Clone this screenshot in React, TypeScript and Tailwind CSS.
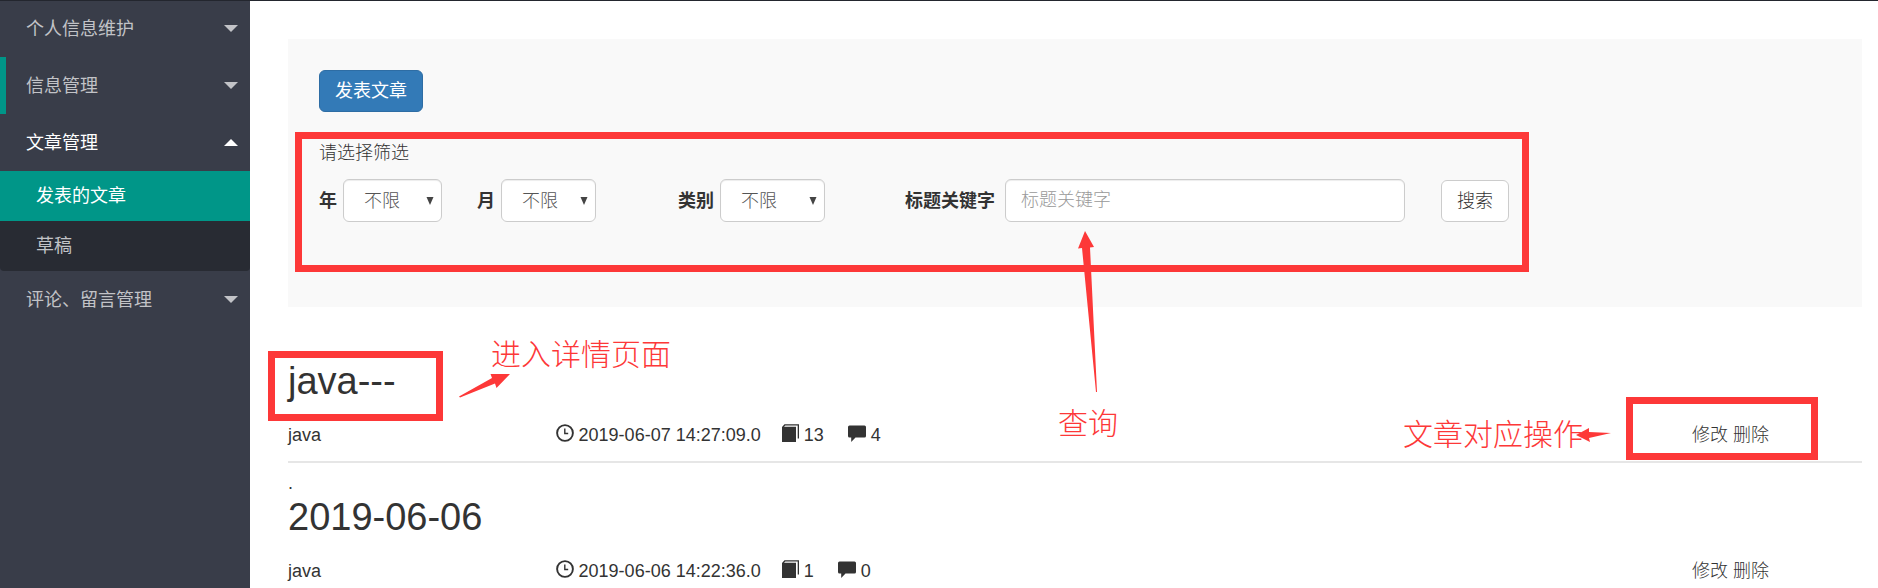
import { useState, type ReactNode } from 'react';

const CJK = "font-['Liberation_Sans','Noto_Sans_CJK_SC',sans-serif]";

function Caret({ up = false }: { up?: boolean }) {
  return (
    <svg viewBox="0 0 14 7" className="h-[7px] w-3.5 shrink-0" aria-hidden="true">
      <path d={up ? 'M0 7 7 0l7 7z' : 'M0 0h14L7 7z'} fill="currentColor" />
    </svg>
  );
}

function NavGroup({ label, open = false, marked = false, children }: { label: string; open?: boolean; marked?: boolean; children?: ReactNode }) {
  return (
    <li>
      <button
        type="button"
        aria-expanded={open}
        className={`flex h-[57px] w-full items-center justify-between border-l-[6px] pr-3 pl-5 text-left ${marked ? 'border-[#009688]' : 'border-transparent'} ${open ? 'text-white' : 'text-[#c2c3c7]'}`}
      >
        <span>{label}</span>
        <Caret up={open} />
      </button>
      {children}
    </li>
  );
}

function FilterSelect({ id, label, width, options }: { id: string; label: string; width: string; options: string[] }) {
  return (
    <div className="flex items-center gap-1.5">
      <label htmlFor={id} className="shrink-0 font-bold text-[#333]">{label}</label>
      <div className="relative">
        <select
          id={id}
          className={`block h-[43px] appearance-none rounded-md border border-[#ccc] bg-white pl-5 font-light text-[#555] shadow-[inset_0_1px_1px_rgba(0,0,0,0.075)] ${width}`}
        >
          {options.map((o) => <option key={o}>{o}</option>)}
        </select>
        <svg viewBox="0 0 8 8" className="pointer-events-none absolute top-[18px] right-2 size-2" aria-hidden="true">
          <path d="M.5 0h7L4 8z" fill="#444" />
        </svg>
      </div>
    </div>
  );
}

function ClockIcon() {
  return (
    <svg viewBox="0 0 18 18" className="-mt-1 size-[18px]" fill="none" stroke="#333" aria-hidden="true">
      <circle cx="9" cy="9" r="7.9" strokeWidth="1.9" />
      <path d="M8.800 4.500v5h3.400" strokeWidth="1.4" />
    </svg>
  );
}

function BookIcon() {
  return (
    <svg viewBox="0 0 18 18" className="-mt-1 size-[18px]" aria-hidden="true">
      <path d="M1 3 3.500.3H18v14.200h-1.300V1.500H4.300L3 2.800h12V18H1z" fill="#333" />
    </svg>
  );
}

function CommentIcon() {
  return (
    <svg viewBox="0 0 18 18" className="-mt-1 size-[18px]" aria-hidden="true">
      <path d="M1.500 1.500h15A1.500 1.500 0 0 1 18 3v9a1.500 1.500 0 0 1-1.500 1.500H7.500L3.200 18v-4.500H1.500A1.500 1.500 0 0 1 0 12V3a1.500 1.500 0 0 1 1.500-1.500z" fill="#333" />
    </svg>
  );
}

function Highlight({ className }: { className: string }) {
  return <div aria-hidden="true" className={`pointer-events-none absolute border-7 border-[#fd3838] ${className}`} />;
}

function Note({ className, children }: { className: string; children: ReactNode }) {
  return <p className={`pointer-events-none absolute text-3xl leading-9 font-light whitespace-nowrap text-[#fd3838] ${className}`}>{children}</p>;
}

type Article = { title: string; author: string; time: string; reads: number; comments: number };

const articles: Article[] = [
  { title: 'java---', author: 'java', time: '2019-06-07 14:27:09.0', reads: 13, comments: 4 },
  { title: '2019-06-06', author: 'java', time: '2019-06-06 14:22:36.0', reads: 1, comments: 0 },
];

function ArticleRow({ article, annotated }: { article: Article; annotated: boolean }) {
  return (
    <article className="relative h-[136px] border-b-2 border-[#e6e6e6] pt-3">
      <div className="h-5 leading-4">{!annotated && '.'}</div>
      <h2 className="text-[38px] leading-[44px]"><a href="#detail">{article.title}</a></h2>
      <div className="mt-[18px] flex items-center leading-7">
        <span className="w-[17%]">{article.author}</span>
        <div className="flex flex-1 items-center">
          <span className="flex items-center gap-[5px]"><ClockIcon />{article.time}</span>
          <span className="ml-5 flex items-center gap-[5px]"><BookIcon />{article.reads}</span>
          <span className="ml-6 flex items-center gap-[5px]"><CommentIcon />{article.comments}</span>
        </div>
        <div className="relative mr-[93px] flex gap-[5px] font-light">
          <a href="#edit">修改</a>
          <a href="#delete">删除</a>
          {annotated && (
            <>
              <Highlight className="-top-6 -right-[49px] -left-[66px] h-[63px]" />
              <Note className="-top-1 right-[186px]">文章对应操作</Note>
              <svg viewBox="0 0 36 16" className="absolute top-1.5 right-[157px] h-4 w-9" aria-hidden="true">
                <path d="M0 8 13 1v4l22 1-22 5 1 4z" fill="#fd3838" />
              </svg>
            </>
          )}
        </div>
      </div>
      {annotated && (
        <>
          <Highlight className="top-6 -left-5 h-[70px] w-[175px]" />
          <svg viewBox="0 0 52 24" className="absolute top-[47px] left-[171px] h-6 w-[52px]" aria-hidden="true">
            <path d="M0 22.500 33 4l-1.500-4H51L37.500 14l-1.500-4.500L1 23.500z" fill="#fd3838" />
          </svg>
          <Note className="top-2.5 left-[203px]">进入详情页面</Note>
        </>
      )}
    </article>
  );
}

export default function App() {
  const [keyword, setKeyword] = useState('');
  return (
    <div className={`flex h-screen overflow-hidden bg-white text-lg text-[#333] ${CJK}`}>
      <nav className="w-[250px] shrink-0 border-t border-[#23262e] bg-[#393d49]">
        <ul className="-mt-px">
          <NavGroup label="个人信息维护" />
          <NavGroup label="信息管理" marked />
          <NavGroup label="文章管理" open>
            <ul className="rounded-b-sm bg-[#282b33]">
              <li><a href="#published" className="flex h-[50px] items-center bg-[#009688] pl-9 text-white">发表的文章</a></li>
              <li><a href="#drafts" className="flex h-[50px] items-center pl-9 text-[#c2c3c7]">草稿</a></li>
            </ul>
          </NavGroup>
          <NavGroup label="评论、留言管理" />
        </ul>
      </nav>
      <main className="min-w-0 flex-1 border-t border-[#23262e] pt-[38px] pr-4 pl-[38px]">
        <section className="relative h-[268px] bg-[#f9f9f9] px-[31px] pt-[31px]">
          <button type="button" className="block h-[42px] rounded-md border border-[#2e6da4] bg-[#337ab7] px-[15px] text-white">发表文章</button>
          <p className="mt-[27px] leading-7 font-light">请选择筛选</p>
          <form className="mt-3 flex items-center" onSubmit={(e) => e.preventDefault()}>
            <FilterSelect id="year" label="年" width="w-[99px]" options={['不限', '2019', '2018']} />
            <div className="ml-[35px]"><FilterSelect id="month" label="月" width="w-[95px]" options={['不限', '1', '2', '3']} /></div>
            <div className="ml-[82px]"><FilterSelect id="category" label="类别" width="w-[105px]" options={['不限', 'java']} /></div>
            <div className="ml-20 flex items-center gap-1.5">
              <label htmlFor="keyword" className="w-[94px] shrink-0 font-bold">标题关键字</label>
              <div className="relative">
                <input
                  id="keyword"
                  value={keyword}
                  onChange={(e) => setKeyword(e.target.value)}
                  placeholder="标题关键字"
                  className="block h-[43px] w-[400px] rounded-md border border-[#ccc] bg-white px-[15px] font-light shadow-[inset_0_1px_1px_rgba(0,0,0,0.075)] placeholder:text-[#999]"
                />
                <svg viewBox="0 0 20 162" className="absolute top-[52px] left-[72px] z-10 h-[162px] w-5" aria-hidden="true">
                  <path d="m8 0 9 16-4 .5L20 161h-1L5 17l-4 .5z" fill="#fd3838" />
                </svg>
                <Note className="top-[227px] left-[53px] z-10">查询</Note>
              </div>
            </div>
            <button type="submit" className="ml-9 h-[42px] rounded-md border border-[#ccc] bg-white px-[15px] font-light">搜索</button>
          </form>
          <Highlight className="top-[93px] left-[7px] h-[140px] w-[1234px]" />
        </section>
        <div className="mt-5">
          {articles.map((a, i) => <ArticleRow key={a.time} article={a} annotated={i === 0} />)}
        </div>
      </main>
    </div>
  );
}
